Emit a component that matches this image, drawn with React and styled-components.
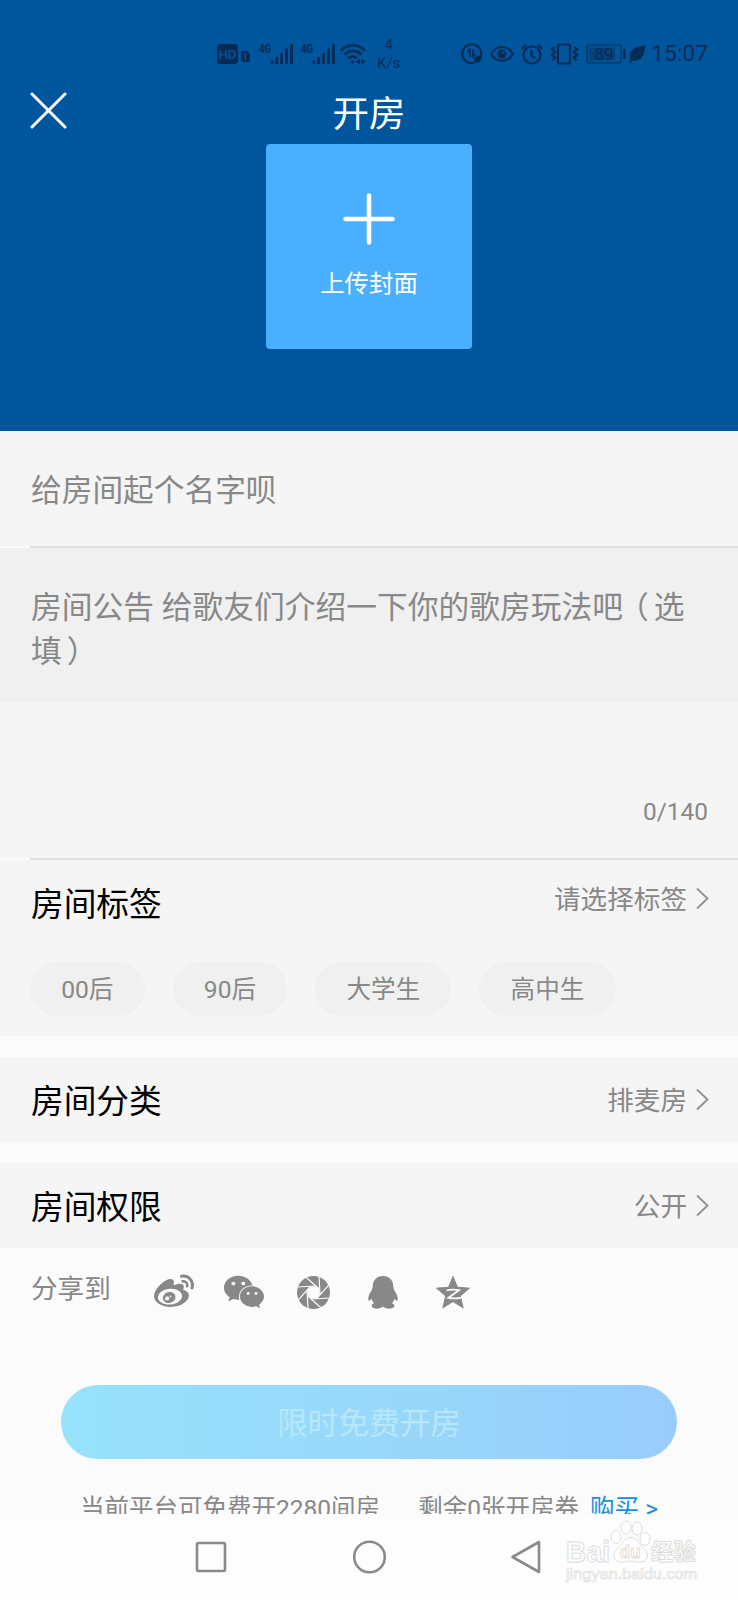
import React from "react";
import styled, { createGlobalStyle } from "styled-components";
import { FaWeibo, FaWeixin } from "react-icons/fa";

const tags = ["00后", "90后", "大学生", "高中生"];

const HdIcon = () => (
  <svg width="33" height="22" viewBox="0 0 33 22">
    <rect x="0" y="1" width="21" height="20" rx="3" fill="#052b55" />
    <text x="10.5" y="16" textAnchor="middle" fontSize="13" fontWeight="500" fill="#00569d">
      HD
    </text>
    <path d="M24 8h6l3 3v8h-9z" fill="#052b55" />
    <path d="M27 11.5l1.5-1v6.500" fill="none" stroke="#00569d" strokeWidth="1.300" />
  </svg>
);

const SignalIcon = () => (
  <svg width="35" height="22" viewBox="0 0 35 22">
    <text x="0" y="10" fontSize="13.500" fontWeight="700" textLength="12" lengthAdjust="spacingAndGlyphs">
      4G
    </text>
    <path
      d="M13 17.500V21M17.700 14v7M22.500 10v11M27.500 5.500V21M32.500 1v20"
      stroke="currentColor"
      strokeWidth="2.900"
    />
  </svg>
);

const WifiIcon = () => (
  <svg width="26" height="22" viewBox="0 0 26 22" fill="none" stroke="currentColor" strokeWidth="2.700">
    <path d="M1 7.500C8 .5 18 .5 25 7.500M4.500 11.500c5-4.800 12-4.800 17 0M8 15.500c3-2.800 6-2.800 9 0" />
    <circle cx="12.500" cy="19" r="1.800" fill="currentColor" stroke="none" />
    <path d="M20 15.500v6l-4-3zM21.500 15.500v6l4-3z" fill="currentColor" stroke="none" />
  </svg>
);

const DataIcon = () => (
  <svg width="22" height="22" viewBox="0 0 22 22" fill="none" stroke="currentColor" strokeWidth="2.200">
    <path d="M13 20A9.500 9.500 0 1 1 20 13" />
    <path d="M6.500 9l2.500-2.500V14M12 6.500V14l3-3" strokeWidth="1.700" />
    <path d="M21 12c-7 0-9 4-8 7.500 5 1.500 8-2 8-7.500z" fill="currentColor" stroke="none" />
  </svg>
);

const EyeIcon = () => (
  <svg width="24" height="22" viewBox="0 0 24 22" fill="none" stroke="currentColor" strokeWidth="2">
    <path d="M1.200 11C6 1.500 18 1.500 22.800 11 18 20 6 20 1.200 11z" />
    <circle cx="12" cy="11" r="4.500" fill="currentColor" stroke="none" />
    <circle cx="13.500" cy="9.500" r="1.200" fill="#00569d" stroke="none" />
  </svg>
);

const AlarmIcon = () => (
  <svg width="22" height="22" viewBox="0 0 22 22" fill="none" stroke="currentColor" strokeWidth="2.200">
    <circle cx="11" cy="12" r="8.500" />
    <path d="M1 6l4-4M21 6l-4-4M10.500 7v6l4 2" />
  </svg>
);

const VibrateIcon = () => (
  <svg width="29" height="22" viewBox="0 0 29 22" fill="none" stroke="currentColor" strokeWidth="2.200">
    <rect x="8" y="1.500" width="12" height="19" rx="1.500" />
    <path
      d="M4.500 4L2 6.500l3 2.500-3 3 3 2.500-2.500 3M24.500 4L27 6.500 24 9l3 3-3 2.500 2.500 3"
      strokeWidth="2.300"
    />
  </svg>
);

const BatteryIcon = () => (
  <svg width="40" height="22" viewBox="0 0 40 22">
    <rect x="1" y="2" width="34" height="18" rx="2" fill="none" stroke="currentColor" strokeWidth="1.200" />
    <rect x="3" y="4.500" width="26" height="13" fill="#064179" />
    <text x="18" y="17" textAnchor="middle" fontSize="17">
      89
    </text>
    <rect x="37" y="6" width="2.500" height="10" fill="currentColor" />
  </svg>
);

const LeafIcon = () => (
  <svg width="17" height="20" viewBox="0 0 17 20">
    <path d="M16.500 1.500C4 2.500-1 7.500 1.500 14.500L.3 18.300l1.200.7L3.500 16.500C13 18 15.500 10 16.500 1.500z" fill="currentColor" />
    <path d="M3.500 15Q7 10 11 8" fill="none" stroke="#00569d" strokeWidth=".5" />
  </svg>
);

const CloseIcon = () => (
  <svg width="37" height="37" viewBox="0 0 37 37" stroke="#fff" strokeWidth="3" strokeLinecap="round">
    <path d="M2 2l33 33M35 2L2 35" />
  </svg>
);

const PlusIcon = () => (
  <svg width="52" height="52" viewBox="0 0 52 52" stroke="#fff" strokeWidth="4.500" strokeLinecap="round">
    <path d="M26 2.500v47M2.500 26h47" />
  </svg>
);

const ChevronIcon = () => (
  <svg width="13" height="22" viewBox="0 0 13 22" fill="none" stroke="#8f8f8f" strokeWidth="1.800">
    <path d="M1 .5l10.500 10L1 20.500" />
  </svg>
);

const blades = [0, 45, 90, 135, 180, 225, 270, 315];

const MomentsIcon = () => (
  <svg width="33" height="33" viewBox="0 0 33 33">
    <circle cx="16.500" cy="16.500" r="16.500" fill="currentColor" />
    <circle cx="16.500" cy="16.500" r="6.300" fill="#fbfbfb" />
    {blades.map((angle) => (
      <path
        key={angle}
        d="M23 18.500L22 0"
        stroke="#fbfbfb"
        strokeWidth="1.200"
        transform={`rotate(${angle} 16.5 16.5)`}
      />
    ))}
  </svg>
);

const QqIcon = () => (
  <svg width="30" height="33" viewBox="0 0 30 33" fill="currentColor">
    <path d="M15 0C8.500 0 4.800 4.500 4.800 10c0 1.500-.7 2.500-.8 4C1.800 17 0 20 .3 24c.2 1.500 1.700.5 3.200-1.200.5 1.700 1.300 3.200 2.500 4.500-2 .7-2.700 2-2.200 3.300.8 2.800 8.500 2.800 10.700.2h1c2.200 2.600 9.900 2.600 10.700-.2.5-1.300-.2-2.600-2.200-3.300 1.200-1.300 2-2.800 2.500-4.500 1.500 1.700 3 2.700 3.200 1.200.3-4-1.500-7-3.700-10-.1-1.500-.8-2.500-.8-4C25.200 4.500 21.500 0 15 0z" />
  </svg>
);

const QzoneIcon = () => (
  <svg width="34" height="33" viewBox="0 0 34 33">
    <path
      d="M17 .5l4.500 10.700 12 1-9.200 7.700 2.900 12L17 25.500 6.800 31.900l2.900-12L.5 12.200l12-1z"
      fill="currentColor"
      stroke="currentColor"
      strokeLinejoin="round"
    />
    <path d="M10.500 14.500q6-1.500 12.500-.3l-10.500 7.600q6 1 12.500 0" fill="none" stroke="#fbfbfb" strokeWidth="1.800" />
  </svg>
);

const Watermark = () => (
  <WatermarkBox>
    <svg width="136" height="70" viewBox="0 0 136 70" fill="#fff" stroke="#dcdcdc" strokeWidth="1">
      <text x="2" y="43.500" fontSize="30" fontWeight="700" fontFamily="Liberation Sans" textLength="44" lengthAdjust="spacingAndGlyphs">
        Bai
      </text>
      <path d="M66.500 19.500c-6.500 0-7.500 6.500-12.500 10.500-7 6-4 14 3 14 4 0 5-1 9.500-1s6 1 10 1c7 0 10-8 3-13.500-5-4.500-6.500-11-13-11z" />
      <ellipse cx="52" cy="19" rx="5" ry="6.500" />
      <ellipse cx="62" cy="9.500" rx="5" ry="6.500" />
      <ellipse cx="73" cy="10.500" rx="5" ry="6.500" />
      <ellipse cx="81" cy="21" rx="5" ry="6.500" />
      <text x="55.500" y="40" fontSize="19" fontWeight="700" fontFamily="Liberation Sans" textLength="21" lengthAdjust="spacingAndGlyphs">
        du
      </text>
      <text x="87" y="42" fontSize="23" fontWeight="700" textLength="45" lengthAdjust="spacingAndGlyphs">
        经验
      </text>
      <text x="2" y="60.500" fontSize="15" fontFamily="Liberation Sans" strokeWidth=".6" textLength="131" lengthAdjust="spacingAndGlyphs">
        jingyan.baidu.com
      </text>
    </svg>
  </WatermarkBox>
);

const App = () => {
  return (
    <>
      <GlobalStyle />
      <Page>
        <Header>
          <StatusBar>
            <StatusGroup>
              <HdIcon />
              <Signals>
                <SignalIcon />
                <SignalIcon />
              </Signals>
              <WifiIcon />
              <Speed>
                <span>4</span>
                <span>K/s</span>
              </Speed>
            </StatusGroup>
            <StatusGroup>
              <DataIcon />
              <EyeIcon />
              <AlarmIcon />
              <VibrateIcon />
              <Power>
                <BatteryIcon />
                <LeafIcon />
              </Power>
              <Clock>15:07</Clock>
            </StatusGroup>
          </StatusBar>
          <TitleBar>
            <CloseButton aria-label="关闭">
              <CloseIcon />
            </CloseButton>
            <Title>开房</Title>
          </TitleBar>
          <CoverButton>
            <PlusIcon />
            <span>上传封面</span>
          </CoverButton>
        </Header>

        <NameField>给房间起个名字呗</NameField>
        <Divider />
        <Notice>
          房间公告 给歌友们介绍一下你的歌房玩法吧<Paren shift={-5}>（</Paren>选填
          <Paren shift={5}>）</Paren>
        </Notice>
        <CounterArea>0/140</CounterArea>
        <Divider />

        <TagSection>
          <Row>
            <Label>房间标签</Label>
            <Value raised>
              <span>请选择标签</span>
              <ChevronIcon />
            </Value>
          </Row>
          <TagList>
            {tags.map((tag) => (
              <Tag key={tag}>{tag}</Tag>
            ))}
          </TagList>
        </TagSection>
        <Row>
          <Label>房间分类</Label>
          <Value>
            <span>排麦房</span>
            <ChevronIcon />
          </Value>
        </Row>
        <RowGap />
        <Row>
          <Label>房间权限</Label>
          <Value>
            <span>公开</span>
            <ChevronIcon />
          </Value>
        </Row>

        <ShareBar>
          <ShareLabel>分享到</ShareLabel>
          <ShareIcons>
            <FaWeibo size={40} />
            <FaWeixin size={42} />
            <MomentsIcon />
            <QqIcon />
            <QzoneIcon />
          </ShareIcons>
        </ShareBar>

        <SubmitButton>限时免费开房</SubmitButton>
        <Hint>
          <span>当前平台可免费开2280间房</span>
          <HintRight>
            剩余0张开房券 <BuyLink>购买 &gt;</BuyLink>
          </HintRight>
        </Hint>

        <SystemNav>
          <svg width="32" height="34" viewBox="0 0 32 34">
            <rect x="2" y="3" width="28" height="28" rx="1.500" />
          </svg>
          <svg width="34" height="34" viewBox="0 0 34 34">
            <circle cx="17.500" cy="17" r="15.300" />
          </svg>
          <svg width="32" height="34" viewBox="0 0 32 34">
            <path d="M29 2v30L2.500 17z" />
          </svg>
          <Watermark />
        </SystemNav>
      </Page>
    </>
  );
};

export default App;

const GlobalStyle = createGlobalStyle`
  * {
    box-sizing: border-box;
  }

  body {
    margin: 0;
    background: #fbfbfb;
    font-family: Roboto, "Noto Sans CJK SC", sans-serif;
  }

  svg {
    display: block;
    flex-shrink: 0;
  }

  button {
    border: 0;
    padding: 0;
    background: none;
    font-family: inherit;
  }
`;

const Page = styled.main`
  width: 738px;
  height: 1600px;
  overflow: hidden;
  display: flex;
  flex-direction: column;
  background: #fbfbfb;

  > * {
    flex-shrink: 0;
  }
`;

const Header = styled.header`
  height: 431px;
  background: #00569d;
  display: flex;
  flex-direction: column;
  align-items: center;
`;

const StatusBar = styled.div`
  width: 100%;
  height: 82px;
  padding: 26px 30px 0 217px;
  display: flex;
  justify-content: space-between;
  color: #052b55;

  text {
    fill: currentColor;
  }

  svg text[fill] {
    fill: #00569d;
  }
`;

const StatusGroup = styled.div`
  display: flex;
  align-items: center;
  height: 56px;
  gap: 7px;
`;

const Signals = styled.div`
  display: flex;
  gap: 7px;
  margin: 0 -3px 0 2px;
`;

const Speed = styled.div`
  margin-left: 4px;
  display: flex;
  flex-direction: column;
  align-items: center;
  font-size: 15px;
  line-height: 18px;
`;

const Power = styled.div`
  display: flex;
  align-items: center;
  gap: 3px;
`;

const Clock = styled.span`
  font-size: 22.800px;
  line-height: 28px;
  margin-left: -2px;
`;

const TitleBar = styled.div`
  width: 100%;
  height: 62px;
  padding: 0 30px;
  display: grid;
  grid-template-columns: 37px 1fr 37px;
  align-items: center;
`;

const CloseButton = styled.button`
  width: 37px;
  height: 37px;
  margin-bottom: 5px;
`;

const Title = styled.h1`
  margin: 3px 0 0;
  text-align: center;
  font-size: 36.500px;
  font-weight: 400;
  line-height: 50px;
  color: #fff;
`;

const CoverButton = styled.button`
  width: 206px;
  height: 205px;
  border-radius: 4px;
  background: #4bafff;
  color: #fff;
  font-size: 24.400px;
  line-height: 34px;
  display: flex;
  flex-direction: column;
  align-items: center;
  padding-top: 49px;
  gap: 22px;
`;

const NameField = styled.div`
  height: 115px;
  padding: 0 31px 2px;
  display: flex;
  align-items: center;
  background: #f5f5f5;
  font-size: 30.700px;
  color: #888;
`;

const Divider = styled.hr`
  margin: 0;
  border: 0;
  height: 2px;
  background: linear-gradient(to right, #fbfbfb 30px, #e0e0e0 30px);
`;

const Notice = styled.div`
  height: 154px;
  padding: 38px 30px 0 31px;
  background: #f0f0f0;
  font-size: 30.750px;
  line-height: 44px;
  color: #888;
`;

/* full-width brackets sit in the middle of their cell */
const Paren = styled.span`
  margin-left: ${({ shift }) => shift}px;
  margin-right: ${({ shift }) => -shift}px;
`;

const CounterArea = styled.div`
  height: 156px;
  padding: 0 30px 31px;
  display: flex;
  align-items: flex-end;
  justify-content: flex-end;
  background: #f5f5f5;
  font-size: 24.400px;
  line-height: 30px;
  color: #888;
`;

const TagSection = styled.section`
  height: 176px;
  margin-bottom: 21px;
  background: #f5f5f5;
`;

const Row = styled.div`
  height: 85px;
  padding: 0 29px 0 31px;
  display: flex;
  align-items: center;
  justify-content: space-between;
  background: #f5f5f5;
`;

const RowGap = styled.div`
  height: 21px;
`;

const Label = styled.span`
  padding-top: 4px;
  font-size: 32.700px;
  line-height: 44px;
  color: #000;
`;

const Value = styled.span`
  display: flex;
  align-items: center;
  gap: 9px;
  font-size: 26.600px;
  line-height: 36px;
  color: #888;
  margin-bottom: ${({ raised }) => (raised ? 8 : 0)}px;

  span {
    padding-top: 2px;
  }
`;

const TagList = styled.div`
  display: flex;
  gap: 28px;
  padding: 17px 30px 0;
`;

const Tag = styled.span`
  height: 54px;
  padding: 0 31.200px;
  border-radius: 27px;
  background: #f0f0f0;
  font-size: 24.600px;
  line-height: 56px;
  color: #888;
`;

const ShareBar = styled.div`
  height: 137px;
  padding: 23px 31px 0;
  display: flex;
  align-items: flex-start;
  color: #888;
`;

const ShareLabel = styled.span`
  width: 123px;
  font-size: 26.600px;
  line-height: 36px;
`;

const ShareIcons = styled.div`
  display: grid;
  grid-template-columns: repeat(5, 40px);
  gap: 29.700px;
  height: 40px;
  align-items: center;
  justify-items: center;
`;

const SubmitButton = styled.button`
  align-self: center;
  width: 616px;
  height: 74px;
  padding-bottom: 3px;
  border-radius: 37px;
  background: linear-gradient(to right, #97e2fc, #98d6fa 60%, #98ccfd);
  color: #b9e7fd;
  font-size: 30.700px;
`;

const Hint = styled.div`
  height: 55px;
  padding: 32px 80px 0;
  overflow: hidden;
  display: flex;
  justify-content: space-between;
  font-size: 24.500px;
  line-height: 36px;
  white-space: nowrap;
  color: #888;
`;

const HintRight = styled.span`
  display: flex;
  gap: 11px;
`;

const BuyLink = styled.span`
  color: #1a8fd6;
`;

const SystemNav = styled.nav`
  position: relative;
  height: 86px;
  padding: 26px 196px 0 195px;
  display: flex;
  justify-content: space-between;
  background: #fdfdfd;

  > svg {
    fill: none;
    stroke: #8a8a8a;
    stroke-width: 2.600;
    stroke-linejoin: round;
  }
`;

const WatermarkBox = styled.div`
  position: absolute;
  top: 4px;
  right: 38px;
`;
